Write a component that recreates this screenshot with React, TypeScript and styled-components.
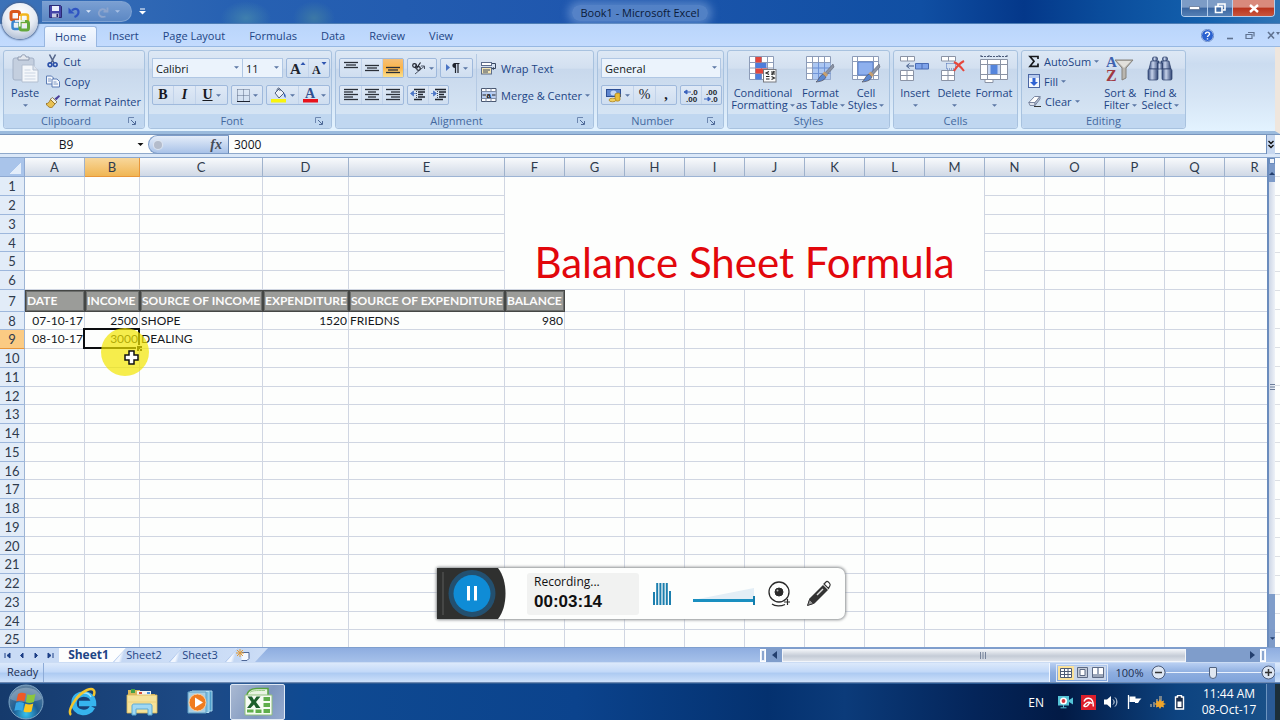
import React from "react";
import styled, { createGlobalStyle, css } from "styled-components";

const UI = `"Open Sans", "Noto Sans", sans-serif`;
const CELL = `"Lato", "Open Sans", sans-serif`;

const Global = createGlobalStyle`
  * { box-sizing: border-box; }
  body { margin: 0; background: #0c3c7c; font-family: ${UI}; font-size: 11px; color: #1d4585; }
  button, input, select { font: inherit; color: inherit; margin: 0; padding: 0; }
  button { border: 0; background: none; cursor: default; }
  svg { display: block; flex: none; }
`;

const Desktop = styled.div`
  position: relative;
  display: flex;
  flex-direction: column;
  height: 100vh;
  min-height: 480px;
  overflow: hidden;
`;

/* ---------- title bar ---------- */
const TitleBar = styled.header`
  display: grid;
  grid-template-columns: 1fr auto 1fr;
  height: 24px;
  border-bottom: 1px solid #4d7db5;
  background:
    radial-gradient(ellipse 36px 24px at 246px 18px, #3f7fae 0, transparent 70%),
    radial-gradient(ellipse 30px 24px at 314px 18px, #3c78a6 0, transparent 70%),
    linear-gradient(90deg, #3c72b8 0, #2761b2 18%, #1f57ae 45%, #104fa3 72%, #04388a 80%, #0a4c9b 86%, #1360ad 94%, #2f74b5 100%);
`;
const QuickZone = styled.div`
  display: flex;
  align-items: center;
  padding-left: 42px;
`;
const QuickBar = styled.div`
  display: flex;
  align-items: center;
  gap: 6px;
  height: 21px;
  width: 90px;
  padding-left: 7px;
  border: 1px solid #7fa3d3;
  border-left: 0;
  border-radius: 0 11px 11px 0;
  background: linear-gradient(#7a9fd2, #5c88c4);
`;
const QuickMore = styled.button`
  margin-left: 7px;
`;
const WindowTitle = styled.h1`
  margin: 2px 0 0;
  align-self: center;
  padding: 0 8px;
  font-size: 11px;
  line-height: 16px;
  font-weight: 400;
  color: #0a1a38;
  border-radius: 8px;
  background: rgba(150, 185, 230, 0.45);
  box-shadow: 0 0 8px 4px rgba(150, 185, 230, 0.45);
`;
const WindowButtons = styled.div`
  justify-self: end;
  display: flex;
  height: 17px;
  margin-right: 5px;
  border: 1px solid #b3cdec;
  border-top: 0;
  border-radius: 0 0 4px 4px;
  overflow: hidden;
`;
const WindowButton = styled.button<{ $close?: boolean }>`
  display: grid;
  place-items: center;
  width: ${(p) => (p.$close ? 42 : 25)}px;
  & + & { border-left: 1px solid #b3cdec; }
  background: ${(p) =>
    p.$close ? "linear-gradient(#d98a7c 45%, #b8331d 50%, #c9553c)" : "linear-gradient(#7d9cc6 45%, #3a659f 50%, #5580b5)"};
`;
const OfficeOrb = styled.button`
  position: absolute;
  left: 2px;
  top: 3px;
  z-index: 3;
  width: 36px;
  height: 36px;
  border-radius: 50%;
  display: grid;
  place-items: center;
  background: radial-gradient(circle at 50% 30%, #ffffff 0, #e6ebf3 50%, #aebcd2 85%, #e8eef8 100%);
  box-shadow: 0 0 2px 1px #48628c;
`;

/* ---------- ribbon ---------- */
const TabRow = styled.nav`
  display: flex;
  align-items: flex-end;
  height: 23px;
  padding: 0 0 0 44px;
  background: linear-gradient(#b9d5fb, #c3dbfe);
  border-bottom: 1px solid #97b8e2;
`;
const Tab = styled.button<{ $active?: boolean }>`
  height: 21px;
  padding: 0 12px;
  line-height: 20px;
  ${(p) =>
    p.$active &&
    css`
      padding: 0 10px;
      margin-bottom: -1px;
      line-height: 18px;
      border: 1px solid #98b6e0;
      border-bottom: 0;
      border-radius: 3px 3px 0 0;
      background: linear-gradient(#f4f9ff, #e0eafa);
    `}
`;
const TabTools = styled.div`
  margin-left: auto;
  display: flex;
  align-items: center;
  gap: 12px;
  height: 22px;
`;
const Ribbon = styled.section`
  display: flex;
  gap: 3px;
  height: 87px;
  padding: 3px 0 2px 3px;
  background: linear-gradient(#dbe7f6 0, #cbdcf0 20%, #d6e5f5 60%, #e3f3ff 100%);
  border-bottom: 3px solid #9bbbdd;
  border-right: 5px solid #efe6dd;
`;
const GroupBox = styled.fieldset<{ $w: number }>`
  display: flex;
  flex-direction: column;
  width: ${(p) => p.$w}px;
  min-width: 0;
  margin: 0;
  padding: 0;
  border: 1px solid #a8c2df;
  border-radius: 3px;
  background: linear-gradient(#dde8f5 0, #d3e0f0 22%, #c8d8ec 24%, #d9e8f6 100%);
`;
const GroupBody = styled.div`
  display: flex;
  flex: 1;
  min-height: 0;
  padding: 0 3px;
`;
const GroupLabel = styled.div<{ $launch?: boolean }>`
  display: grid;
  grid-template-columns: ${(p) => (p.$launch ? "1fr 16px" : "1fr")};
  align-items: center;
  height: 14px;
  line-height: 14px;
  text-align: center;
  color: #44699f;
  background: #c0d7f0;
  border-radius: 0 0 3px 3px;
`;
const BigButton = styled.button<{ $w: number }>`
  display: flex;
  flex-direction: column;
  align-items: center;
  width: ${(p) => p.$w}px;
  padding-top: 3px;
  line-height: 12px;
  white-space: nowrap;
`;
const BigIcon = styled.span`
  display: grid;
  place-items: center;
  height: 30px;
  margin-bottom: 3px;
`;
const CaretLine = styled.span`
  display: flex;
  align-items: center;
  gap: 2px;
  height: 12px;
`;
const SmallList = styled.div`
  display: flex;
  flex-direction: column;
  padding-left: 3px;
`;
const SmallButton = styled.button`
  display: flex;
  align-items: center;
  gap: 3px;
  height: 20px;
  white-space: nowrap;
  & > svg:first-child { margin-right: 1px; }
`;
const Rows = styled.div`
  display: flex;
  flex-direction: column;
  gap: 7px;
  padding-top: 7px;
  flex: 1;
`;
const Row = styled.div`
  display: flex;
  gap: 3px;
  height: 20px;
`;
const ButtonSet = styled.div`
  display: flex;
  border: 1px solid #9fb9dc;
  border-radius: 2px;
  background: linear-gradient(#dfe9f6, #cfdef0);
`;
const Tool = styled.button<{ $w: number; $on?: boolean }>`
  display: flex;
  align-items: center;
  justify-content: center;
  gap: 3px;
  width: ${(p) => p.$w}px;
  color: #17191f;
  font-family: "Liberation Serif", serif;
  font-size: 14px;
  line-height: 16px;
  & + & { border-left: 1px solid #c2d3ea; }
  background: ${(p) => (p.$on ? "linear-gradient(#f5c078, #fbb54a 50%, #fbe08c)" : "none")};
`;
const SelectBox = styled.label<{ $w: number }>`
  position: relative;
  display: block;
  width: ${(p) => p.$w}px;
  height: 20px;
  svg { position: absolute; right: 4px; top: 8px; pointer-events: none; }
  & + & { margin-left: -4px; }
`;
const Select = styled.select`
  appearance: none;
  width: 100%;
  height: 20px;
  padding: 0 3px;
  border: 1px solid #b0c7e4;
  border-radius: 0;
  background: #ebf3fc;
  color: #101820;
  outline: 0;
`;
const WideTools = styled.div`
  display: flex;
  flex-direction: column;
  gap: 7px;
  margin: 3px 0;
  padding: 4px 0 0 4px;
  border-left: 1px solid #b5cae4;
`;

/* ---------- formula bar ---------- */
const FormulaBar = styled.div`
  display: flex;
  height: 23px;
  padding-right: 5px;
  border-bottom: 3px solid #dbe8f8;
  border-top: 1px solid #7896bd;
  background: #fdfefd;
  box-shadow: inset 0 -1px 0 #8fa9cb;
`;
const NameBox = styled.label`
  display: flex;
  align-items: center;
  width: 148px;
  padding-right: 4px;
`;
const BarInput = styled.input<{ $center?: boolean }>`
  flex: 1;
  min-width: 0;
  height: 18px;
  border: 0;
  outline: 0;
  background: transparent;
  color: #10141c;
  font-size: 12px;
  padding: ${(p) => (p.$center ? "0 5px 0 0" : "0 5px")};
  text-align: ${(p) => (p.$center ? "center" : "left")};
`;
const FxPill = styled.div`
  display: flex;
  align-items: center;
  justify-content: space-between;
  width: 81px;
  height: 19px;
  padding: 0 6px 0 5px;
  border: 1px solid #7d9cc8;
  border-right: 1px solid #6787b4;
  border-radius: 10px 0 0 10px;
  background: linear-gradient(#e4edf9, #a9c2e8);
  font: italic 700 14px/18px "Liberation Serif", serif;
  color: #444b58;
`;
const Knob = styled.span`
  width: 8px;
  height: 8px;
  border-radius: 50%;
  background: #b4bccb;
  box-shadow: 0 0 1px 1px #dfe6f0;
`;
const ExpandButton = styled.button`
  display: grid;
  place-items: center;
  width: 9px;
  border-left: 1px solid #6f8fbd;
  background: #c7d8f0;
  color: #111;
`;

/* ---------- worksheet ---------- */
const SheetArea = styled.main`
  display: flex;
  flex: 1;
  min-height: 0;
  background: #fdfefd;
  border-top: 1px solid #8ba7cd;
`;
const SheetView = styled.div`
  flex: 1;
  min-width: 0;
  overflow: hidden;
`;
const Grid = styled.table`
  table-layout: fixed;
  width: 1285px;
  border-collapse: separate;
  border-spacing: 0;
  font-family: ${CELL};
  font-size: 12px;
  line-height: 16px;
  color: #15181c;
`;
const GridRow = styled.tr<{ $h: number }>`
  height: ${(p) => p.$h}px;
`;
const Corner = styled.td`
  padding: 0;
  border-right: 1px solid #8ea9d2;
  border-bottom: 1px solid #8ea9d2;
  background: linear-gradient(135deg, transparent 50%, #e3edfa 50%) 9px 5px / 12px 11px no-repeat #a9c4ea;
`;
const ColHead = styled.th<{ $on?: boolean }>`
  padding: 0;
  font-weight: 400;
  font-size: 13px;
  line-height: 17px;
  color: #2f3b4d;
  border-right: 1px solid ${(p) => (p.$on ? "#e8963a" : "#9fb2cc")};
  border-bottom: 1px solid ${(p) => (p.$on ? "#e8963a" : "#9db4d4")};
  background: ${(p) => (p.$on ? "linear-gradient(#f8d79b, #f0b654)" : "linear-gradient(#f8fafc, #e6ebf2 45%, #d0d9e6)")};
`;
const RowHead = styled.th<{ $on?: boolean }>`
  padding: 0;
  font-weight: 400;
  font-size: 13px;
  line-height: 16px;
  color: #2f3b4d;
  border-right: 1px solid #9db4d4;
  border-bottom: 1px solid ${(p) => (p.$on ? "#e8963a" : "#9db7dc")};
  background: ${(p) => (p.$on ? "#fbcb83" : "#e2ecf8")};
`;
const Cell = styled.td<{ $right?: boolean; $active?: boolean }>`
  position: relative;
  padding: 0 1px;
  white-space: nowrap;
  text-align: ${(p) => (p.$right ? "right" : "left")};
  border-right: 1px solid #d0d6e2;
  border-bottom: 1px solid #d0d6e2;
  ${(p) =>
    p.$active &&
    css`
      &::before {
        content: "";
        position: absolute;
        inset: -2px -1px -1px -2px;
        border: 2px solid #0b0d10;
      }
      &::after {
        content: "";
        position: absolute;
        right: -3px;
        bottom: -3px;
        width: 5px;
        height: 5px;
        border: solid #fdfefd;
        border-width: 1px 0 0 1px;
        background: #0b0d10;
      }
    `}
`;
const LabelCell = styled.td`
  padding: 0 1px;
  overflow: hidden;
  white-space: nowrap;
  font-weight: 700;
  color: #fbfbfb;
  background: #9b9c99;
  border: 1px solid #454745;
  box-shadow: inset 0 0 0 1px #6d6f6d;
`;
const TitleCell = styled.td`
  padding: 0 0 2px;
  vertical-align: bottom;
  text-align: center;
  border-right: 1px solid #d0d6e2;
  border-bottom: 1px solid #d0d6e2;
  font-size: 42px;
  line-height: 50px;
  color: #e2070c;
`;
const VScroll = styled.div`
  display: flex;
  flex-direction: column;
  width: 8px;
  border-left: 2px solid #6a8cbd;
  background: #dfe6f2;
`;
const VSplit = styled.div`
  height: 6px;
  background: #eef3fa;
  border: 1px solid #6a8cbd;
`;
const VArrow = styled.button`
  display: grid;
  place-items: center;
  height: 18px;
  background: #7d9bc9;
`;
const VThumb = styled.div`
  flex: 1;
  display: grid;
  place-items: center;
  background: linear-gradient(90deg, #cdd6e6, #eef2f8);
`;
const VTrack = styled.div`
  height: 35px;
  background: #7f9dca;
`;
const OuterEdge = styled.div`
  width: 5px;
  background: repeating-linear-gradient(#fdfefd 0 18px, #dcdfe4 18px 19px);
`;

/* ---------- sheet tabs ---------- */
const SheetBar = styled.div`
  display: flex;
  height: 16px;
  padding-right: 14px;
  border-top: 1px solid #7f9fce;
  border-bottom: 1px solid #cbdcf4;
  background: linear-gradient(#8eade0, #a6c1ea);
`;
const SheetNav = styled.div`
  display: flex;
  align-items: center;
  width: 59px;
  padding-left: 4px;
  gap: 6px;
  background: #c9dbf5;
`;
const SheetTab = styled.button<{ $on?: boolean; $w: number }>`
  width: ${(p) => p.$w}px;
  margin-right: -12px;
  padding: 0 8px 1px 0;
  display: grid;
  place-items: center;
  line-height: 13px;
  font-size: ${(p) => (p.$on ? 12 : 11)}px;
  font-weight: ${(p) => (p.$on ? 700 : 400)};
  z-index: ${(p) => (p.$on ? 2 : 1)};
  clip-path: ${(p) =>
    p.$on ? "polygon(0 0, 100% 0, calc(100% - 13px) 100%, 0 100%)" : "polygon(12px 0, 100% 0, calc(100% - 13px) 100%, 0 100%)"};
  background: ${(p) => (p.$on ? "#fdfefe" : "linear-gradient(105deg, #f2f7ff 8px, #c4d7f3 11px, #cddef7 90%, #f2f7ff)")};
`;
const HScroll = styled.div`
  display: flex;
  align-items: center;
  flex: 0 1 506px;
  margin-left: auto;
  background: #7f9dcb;
`;
const Splitter = styled.span`
  width: 6px;
  height: 13px;
  border: 1px solid #ffffff;
  background: #8aa5cf;
  box-shadow: inset 0 0 0 1px #e8effa;
`;
const ScrollArrow = styled.button`
  display: grid;
  place-items: center;
  width: 16px;
  height: 14px;
`;
const HThumb = styled.div`
  flex: 0 1 404px;
  height: 13px;
  display: grid;
  place-items: center;
  background: linear-gradient(#eff2f6, #c4cbd6 55%, #dde2ea);
  border: 1px solid #f2f5fa;
`;
const HGap = styled.div`
  flex: 1;
`;

/* ---------- status bar ---------- */
const StatusBar = styled.footer`
  display: flex;
  height: 20px;
  padding-right: 5px;
  background: linear-gradient(#dce9fb, #c3d9f8 45%, #aecbf2 55%, #cde0fa);
  border-bottom: 1px solid #6c88b1;
`;
const StatusText = styled.span`
  width: 44px;
  padding-left: 7px;
  line-height: 18px;
  color: #1c2f52;
  border-right: 1px solid #8eacd8;
`;
const StatusRight = styled.div`
  display: flex;
  align-items: center;
  margin-left: auto;
  width: 226px;
  padding-left: 6px;
  color: #1c2f52;
  border-left: 1px solid #f0f6ff;
  background: linear-gradient(#b8cff2, #8eaee0 50%, #7fa3da);
`;
const ViewButtons = styled.div`
  display: flex;
  padding: 1px;
  border: 1px solid #dfe9f8;
`;
const ViewButton = styled.button<{ $on?: boolean }>`
  display: grid;
  place-items: center;
  width: 16px;
  height: 14px;
  background: ${(p) => (p.$on ? "#fbe29a" : "#c9d6ea")};
`;
const ZoomText = styled.button`
  width: 43px;
  text-align: center;
`;
const ZoomRange = styled.input`
  appearance: none;
  flex: 1;
  min-width: 0;
  height: 14px;
  background: linear-gradient(#e9f1fd, #e9f1fd) 0 50% / 100% 1px no-repeat;
  &::-webkit-slider-thumb {
    appearance: none;
    width: 8px;
    height: 12px;
    border: 1px solid #51627f;
    border-radius: 1px 1px 4px 4px;
    background: #dfe6f0;
  }
`;

/* ---------- taskbar ---------- */
const Taskbar = styled.footer`
  display: flex;
  align-items: center;
  height: 37px;
  color: #fff;
  background: linear-gradient(90deg, #153a6c 0, #1d4a86 16%, #0f4a92 24%, #0b438d 45%, #04316f 60%, #0b3b7a 66%, #04255a 76%, #021a45 83%, #0d4380 92%, #1b5289 100%);
  border-top: 1px solid #2b5a94;
`;
const TaskButton = styled.button<{ $w: number; $on?: boolean }>`
  display: grid;
  place-items: center;
  width: ${(p) => p.$w}px;
  height: 36px;
  ${(p) =>
    p.$on &&
    css`
      border: 1px solid #dfe9f5;
      border-radius: 2px;
      background: linear-gradient(120deg, #a9b9d2, #7f97bf 60%, #95abd0);
    `}
`;
const Tray = styled.div`
  display: flex;
  align-items: center;
  gap: 8px;
  margin-left: auto;
`;
const Lang = styled.span`
  padding-right: 6px;
  font-size: 12px;
`;
const Clock = styled.time`
  width: 66px;
  text-align: center;
  font-size: 12px;
  line-height: 16px;
  margin: 0 -4px 0 3px;
`;
const ShowDesktop = styled.button`
  width: 14px;
  height: 36px;
  border-left: 1px solid #6d94c0;
  border-right: 5px solid #1c2f3a;
  background: #2a5a95;
`;

/* ---------- screen recorder widget and pointer ---------- */
const Recorder = styled.aside`
  position: absolute;
  left: 437px;
  top: 568px;
  z-index: 5;
  display: flex;
  align-items: center;
  width: 408px;
  height: 51px;
  border-radius: 2px 7px 7px 2px;
  background: #fdfefd;
  box-shadow: 0 0 3px 1px #8a8d90;
  color: #101010;
`;
const PauseButton = styled.button`
  width: 69px;
  height: 51px;
  margin-right: 21px;
`;
const RecordInfo = styled.div`
  width: 112px;
  height: 42px;
  padding: 1px 7px;
  border-radius: 3px;
  background: #f1f2f1;
  font-size: 12px;
  line-height: 16px;
`;
const RecordTime = styled.div`
  font: 700 17px/24px "Liberation Sans", sans-serif;
`;
const Meter = styled.div`
  margin: 0 22px 0 14px;
`;
const Volume = styled.label`
  display: grid;
  align-items: end;
  width: 62px;
  height: 22px;
  margin-right: 13px;
  & > * { grid-area: 1 / 1; }
`;
const VolumeRange = styled.input`
  appearance: none;
  width: 62px;
  height: 9px;
  background: linear-gradient(#1a8fc0, #1a8fc0) 0 50% / 100% 3px no-repeat;
  &::-webkit-slider-thumb {
    appearance: none;
    width: 2px;
    height: 9px;
    background: #137eac;
  }
`;
const RecTool = styled.button`
  width: 26px;
  height: 28px;
  margin-right: 12px;
`;
const ClickHalo = styled.div`
  position: absolute;
  left: 101px;
  top: 328px;
  z-index: 4;
  width: 48px;
  height: 48px;
  border-radius: 50%;
  background: rgba(242, 230, 0, 0.7);
  svg { margin: 22px 0 0 23px; }
`;

/* ---------- icons ---------- */
const Caret = ({ w = 5, c = "#5a76a4" }: { w?: number; c?: string }) => (
  <svg width={w} height={3} viewBox="0 0 6 3"><path d="M0 0h6L3 3z" fill={c} /></svg>
);
const Launcher = () => (
  <svg width="8" height="8" viewBox="0 0 8 8" fill="none" stroke="#6d87b0"><path d="M.5 6V.5H6" /><path d="M3 3l4 4M7.500 4v3.500H4" stroke="#4f6a98" /></svg>
);
const Lines = ({ rows, y = 0 }: { rows: [number, number][]; y?: number }) => (
  <svg width="14" height="14" viewBox="0 0 14 14" stroke="#2a2f38">
    {rows.map(([a, b], i) => <path key={i} d={`M${a} ${y + 1.5 + i * 2.5}H${b}`} strokeWidth="1.3" />)}
  </svg>
);
const Indent = ({ flip }: { flip?: boolean }) => (
  <svg width="16" height="14" viewBox="0 0 16 14" stroke="#20252e" fill="none">
    <path d="M4 1.500h11M8 4h7M8 6.500h5M8 9h7M4 11.500h8" strokeWidth="1.300" />
    <path d="M6.500 1v12" strokeDasharray="1 1" strokeWidth=".8" />
    <path d={flip ? "M0 5.500h4M2.500 3l3 2.500-3 2.500z" : "M6 5.500H2M3.500 3l-3 2.500 3 2.500z"} stroke="#4a74c4" fill="#4a74c4" strokeWidth=".8" />
  </svg>
);
const OfficeLogo = () => (
  <svg width="24" height="24" viewBox="0 0 24 24" fill="none" strokeWidth="3">
    <rect x="3" y="2.500" width="8.500" height="8.500" rx="2" stroke="#d9581c" />
    <rect x="12.500" y="5.500" width="7.500" height="7.500" rx="2" stroke="#f2b61f" strokeWidth="2.500" />
    <rect x="4.500" y="12.500" width="7.500" height="7.500" rx="2" stroke="#3b86cf" strokeWidth="2.500" />
    <rect x="12" y="12.500" width="8.500" height="8.500" rx="2" stroke="#63a83a" />
    <path d="M11.800 7v10.500M7 12h10" stroke="#fff" strokeWidth="1.500" />
  </svg>
);
const SaveIcon = () => (
  <svg width="13" height="13" viewBox="0 0 13 13"><path d="M.5.500h11l1 1v11H.5z" fill="#4546a8" stroke="#2a2b75" /><path d="M3 1h7v5H3z" fill="#e9effb" /><path d="M3 8.500h7v4H3z" fill="#c9cfe4" /><path d="M7.500 9h1.700v3H7.500z" fill="#26276a" /></svg>
);
const Undo = ({ redo }: { redo?: boolean }) => (
  <svg width="12" height="12" viewBox="0 0 12 12" fill="none">
    {redo
      ? <path d="M8.500 10.500C4 12 1 9 2 6c1-3 5-4 7-1M10.500 1.500v4h-4" stroke="#8da5cd" strokeWidth="1.800" />
      : <g><path d="M4 4.500C7 1.500 10.500 3 10.500 6c0 2.500-1.500 4-4 5" stroke="#2f55c2" strokeWidth="2.200" /><path d="M.5 1.500v6h6z" fill="#2f55c2" /></g>}
  </svg>
);
const PasteIcon = () => (
  <svg width="27" height="30" viewBox="0 0 27 30">
    <rect x="1" y="4" width="21" height="22" rx="2" fill="#c4cfdf" stroke="#a3b1c6" />
    <path d="M6 6V3h3c0-3 5-3 5 0h3v3z" fill="#e4e8ee" stroke="#8f9bb0" />
    <path d="M10 11h11l5 5v12H10z" fill="#f4f7fb" stroke="#b3bfd0" />
    <path d="M21 11v5h5" fill="#dde4ee" stroke="#b3bfd0" />
    <path d="M12.500 16h6M12.500 19h11M12.500 22h11M12.500 25h11" stroke="#cbd5e3" />
  </svg>
);
const CutIcon = () => (
  <svg width="13" height="14" viewBox="0 0 13 14" fill="none"><path d="M3.500.500L8 9M9.500.500L5 9" stroke="#55668a" strokeWidth="1.600" /><circle cx="4" cy="10.800" r="1.900" stroke="#2b50a8" strokeWidth="1.600" /><circle cx="9.200" cy="10.600" r="1.900" stroke="#2b50a8" strokeWidth="1.600" /></svg>
);
const CopyIcon = () => (
  <svg width="14" height="13" viewBox="0 0 14 13" fill="#f5f8fd" stroke="#5d7db5"><path d="M.5 1h5l2 2v6h-7z" /><path d="M6 4h5l2.500 2.500V12H6z" /><path d="M2 4h3M2 6h3M7.500 7h3M7.500 9h4.500" strokeWidth=".8" /></svg>
);
const BrushIcon = () => (
  <svg width="14" height="14" viewBox="0 0 14 14"><path d="M13 1L8.500 4.500l1.800 1.800L14 2.500z" fill="#4a3f9a" /><path d="M6.500 3.500l4.500 4.500-2 2-5-4.500z" fill="#f4f0dc" stroke="#6d5a2a" strokeWidth=".7" /><path d="M4.500 5.500L9 10l-3.500 4C3 13.500 1 12 0 9.500c2 .3 3-1 4.500-4z" fill="#e8c152" stroke="#8f6a1c" strokeWidth=".8" /></svg>
);
const GrowA = ({ down }: { down?: boolean }) => (
  <svg width="17" height="16" viewBox="0 0 17 16">
    <text x="1" y="14" fontFamily="Liberation Serif" fontWeight="700" fontSize={down ? 12 : 15} fill="#20242e">A</text>
    <path d={down ? "M10.500 2h5l-2.500 3z" : "M11.500 5h5L14 2z"} fill="#2f55b0" />
  </svg>
);
const BorderIcon = () => (
  <svg width="13" height="13" viewBox="0 0 13 13" stroke="#5a6a86" fill="none" strokeDasharray="1 1"><path d="M.5.500h12v12M.5.500v12M6.500.500v12M.5 6.500h12" /><path d="M0 12.500h13" strokeDasharray="none" stroke="#1c2230" /></svg>
);
const FillColor = () => (
  <svg width="16" height="16" viewBox="0 0 16 16"><path d="M4 6l4.500-4.500L13 6 8 11z" fill="#eef2f8" stroke="#4f5f7e" /><path d="M6 4c0-4 3-4 3 0" fill="none" stroke="#4f5f7e" /><path d="M13 6c2 2 2 3 1.500 5-1.500-1-2-3-1.500-5z" fill="#3765bd" /><path d="M0 12h15v3.500H0z" fill="#f8f40c" /></svg>
);
const FontColor = () => (
  <svg width="15" height="16" viewBox="0 0 15 16"><text x="2" y="11" fontFamily="Liberation Serif" fontWeight="700" fontSize="14" fill="#33508f">A</text><path d="M0 12h15v3.500H0z" fill="#e8131c" /></svg>
);
const Orientation = () => (
  <svg width="15" height="14" viewBox="0 0 15 14" fill="none" stroke="#20242e" strokeWidth="1.200"><circle cx="3.500" cy="4.500" r="1.800" /><path d="M5.500 3.500L4.500 7.500" /><circle cx="7.500" cy="7.500" r="1.800" /><path d="M9.500 1.500L6 6.500" /><path d="M4 13l9-7.500M10 5h3.500v3" stroke="#4c5566" strokeWidth="1" /></svg>
);
const WrapIcon = () => (
  <svg width="16" height="14" viewBox="0 0 16 14" fill="none"><rect x=".5" y="1.500" width="10" height="3" fill="#fff" stroke="#5d6d8a" /><rect x=".5" y="6.500" width="10" height="6.500" fill="#f6e7b5" stroke="#5d6d8a" /><path d="M2 9h7M2 11h5M11 2.500h3.500v5H11" stroke="#374660" /><path d="M13 6l-2.500 1.500L13 9z" fill="#374660" /></svg>
);
const MergeIcon = () => (
  <svg width="16" height="14" viewBox="0 0 16 14"><path d="M.5.500h14.500v13H.5z" fill="#fff" stroke="#4a5872" /><path d="M.5 3.500h14.500M.5 10.500h14.500M5 .5v3M10 .5v3M5 10.500v3M10 10.500v3" stroke="#7e8ca6" /><path d="M1 4h13.500v6H1z" fill="#b9cdf0" /><path d="M1.500 7h3.500M11 7h3.500" stroke="#222" /><text x="5.500" y="9.500" fontSize="8" fontWeight="700" fontFamily="Liberation Sans" fill="#111">a</text></svg>
);
const MoneyIcon = () => (
  <svg width="16" height="15" viewBox="0 0 16 15"><rect x=".5" y="1.500" width="14" height="7" fill="#5f86cf" stroke="#2d4f95" /><ellipse cx="7.500" cy="5" rx="3" ry="2.500" fill="#c5d7f5" /><path d="M9 6c2-1.500 5-1 5 0v6c0 1.500-5 1.500-5 0z" fill="#e9bd3a" stroke="#a87b16" strokeWidth=".7" /><ellipse cx="6.500" cy="12" rx="3.500" ry="1.800" fill="#f1cf5e" stroke="#a87b16" strokeWidth=".7" /></svg>
);
const Decimal = ({ less }: { less?: boolean }) => (
  <svg width="17" height="15" viewBox="0 0 17 15" fontFamily="Liberation Sans" fontWeight="700" fontSize="8">
    <text x={less ? 3 : 8} y="7" fill="#22262e">{less ? ".00" : ".0"}</text>
    <text x={less ? 8 : 3} y="14" fill="#22262e">{less ? ".0" : ".00"}</text>
    <path d={less ? "M1 11h6M5 9l2.500 2L5 13z" : "M2 4h6M4 2L1 4l3 2z"} stroke="#3a63bd" fill="#3a63bd" />
  </svg>
);
const gridPath = "M.5.500h24v23H.5zM.5 6.500h24M.5 12h24M.5 17.500h24M6.500.500v23M12.500.500v23M18.500.500v23";
const CondIcon = () => (
  <svg width="28" height="27" viewBox="0 0 28 27"><path d={gridPath} fill="#fff" stroke="#8d9cb8" /><path d="M6.500 1h6v5.500h-6zM6.500 12.500h12v5h-12z" fill="#e3473e" /><path d="M6.500 7h11v5h-11zM6.500 18h6v5.500h-6z" fill="#4f7edb" /><rect x="14.500" y="13.500" width="12.500" height="12.500" fill="#fbfbfb" stroke="#77797f" /><path d="M20 15.500l-3 1.500 3 1.500M17 20.500h3.500M22 16h4M22 18h4M25 15l-2 4M22.500 20.500l3 1.500-3 1.500M17 23h3.500" stroke="#222" fill="none" strokeWidth="1.100" /></svg>
);
const Brush = () => (
  <g><path d="M27 8L17 19l2 2L28 11z" fill="#8b93a4" stroke="#5c6374" strokeWidth=".6" /><path d="M17 18l3 3c-2 4-6 4.500-10 5 3-2 3-6 7-8z" fill="#5a86cf" stroke="#54525a" strokeWidth=".7" /><path d="M16.500 17.500l2-2 3.500 3.500-2 2z" fill="#c8a070" /></g>
);
const TableFmtIcon = () => (
  <svg width="29" height="27" viewBox="0 0 29 27"><path d={gridPath} fill="#fff" stroke="#8d9cb8" /><path d="M7 7h17.500v16.500H7z" fill="#9dbdf0" opacity=".85" /><path d="M6.500 12h18M6.500 17.500h18M12.500 6.500v17M18.500 6.500v17" stroke="#6f93d6" /><Brush /></svg>
);
const CellStyleIcon = () => (
  <svg width="29" height="27" viewBox="0 0 29 27"><path d="M.5.500h26v23H.5zM.5 5.500h26M.5 19.500h26M5.500.500v23M21.500.500v23" fill="#fff" stroke="#8d9cb8" /><path d="M6 6h15v13H6z" fill="#8eb0ee" stroke="#5a80cc" /><Brush /></svg>
);
const cellBlocks = "M.5.500h14v4.500H.5zM7.500.500v4.500M.5 14.500h13v10H.5zM7 14.500v10M.5 19.500h13";
const InsertIcon = () => (
  <svg width="30" height="27" viewBox="0 0 30 27"><path d={cellBlocks} fill="#fff" stroke="#8a93a5" /><path d="M15.500 7.500h13v5.500h-13zM22 7.500v5.500" fill="#7fa3ea" stroke="#4a6cb4" /><path d="M7 10h7M9.500 7.500L6.500 10l3 2.500" stroke="#3d5686" fill="none" /></svg>
);
const DeleteIcon = () => (
  <svg width="26" height="27" viewBox="0 0 26 27"><path d={cellBlocks} fill="#fff" stroke="#8a93a5" /><path d="M5.500 7.500h9v5.500h-9z" fill="none" stroke="#4a6cb4" strokeDasharray="1 1" /><path d="M13 6c4 2 7 5 10 9M23 5c-4 2-7 5-10 10" stroke="#e6473c" strokeWidth="2" fill="none" /></svg>
);
const FormatIcon = () => (
  <svg width="29" height="28" viewBox="0 0 29 28"><path d="M1 1.500h26M1 0v3M9 0v3M19 0v3M27 0v3" stroke="#4b5a78" strokeDasharray="2 1" /><path d="M.5 4.500h27v20H.5zM.5 9.500h27M.5 19.500h27M7.500 4.500v20M20.500 4.500v20" fill="#fff" stroke="#8a93a5" /><path d="M8 10h12v9H8z" fill="#c7d7f4" /><path d="M10.500 10h7v9h-7z" fill="#5585dc" /><path d="M5 24.500h8v3H5z" fill="#fff" stroke="#8a93a5" /></svg>
);
const SigmaIcon = () => (
  <svg width="12" height="13" viewBox="0 0 12 13"><path d="M10 4V1.500H2l4 4.800-4 5h8V8.500" fill="none" stroke="#16181d" strokeWidth="1.700" /></svg>
);
const FillIcon = () => (
  <svg width="12" height="14" viewBox="0 0 12 14"><rect x=".5" y=".5" width="11" height="13" fill="#f4f7fd" stroke="#4b66a3" /><path d="M1 1h10v3H1z" fill="#b7caee" /><path d="M4.500 4h3v4h2.500L6 12 2 8h2.500z" fill="#2f62d3" /></svg>
);
const ClearIcon = () => (
  <svg width="13" height="12" viewBox="0 0 13 12"><path d="M.8 7.500L6.500 1.500h5.500L7 7.500z" fill="#fdfdfd" stroke="#7b86a0" /><path d="M.8 7.500H7v3H2z" fill="#dfe4ee" stroke="#7b86a0" /><path d="M7 7.500l5-6v2.500L7 10.500z" fill="#b7c0d2" stroke="#7b86a0" /><path d="M6 11.500h7" stroke="#333" /></svg>
);
const SortIcon = () => (
  <svg width="28" height="28" viewBox="0 0 28 28"><path d="M9 5h18l-7 8v10l-4 2V13z" fill="#b9b6b0" stroke="#85827c" /><path d="M11 6h14l-7 7z" fill="#e3e1dc" /><text x="0" y="12" fontFamily="Liberation Serif" fontWeight="700" fontSize="15" fill="#3e62ae">A</text><text x="0" y="26" fontFamily="Liberation Serif" fontWeight="700" fontSize="16" fill="#a03a44">Z</text></svg>
);
const FindIcon = () => (
  <svg width="26" height="26" viewBox="0 0 26 26"><defs><linearGradient id="bino" x1="0" x2="1"><stop offset="0" stopColor="#31497c" /><stop offset=".4" stopColor="#c6d2ea" /><stop offset="1" stopColor="#2c4171" /></linearGradient></defs><g stroke="#2c3f6a" strokeWidth=".7" fill="url(#bino)"><rect x="5.500" y="1" width="5" height="4" rx="1.500" /><rect x="15.500" y="1" width="5" height="4" rx="1.500" /><path d="M4 5h8v8H2z" /><path d="M14 5h8l2 8H14z" /><rect x="10.500" y="7" width="5" height="6" /><rect x="1" y="13" width="10" height="11" rx="1.500" /><rect x="15" y="13" width="10" height="11" rx="1.500" /></g></svg>
);
const HelpIcon = () => (
  <svg width="13" height="13" viewBox="0 0 13 13"><circle cx="6.500" cy="6.500" r="6" fill="#2b62d0" stroke="#dce9fb" /><circle cx="6.500" cy="6.500" r="6.200" fill="none" stroke="#3562b4" strokeWidth=".6" /><path d="M4.500 5c0-2.500 4-2.500 4 0 0 1.500-2 1.500-2 3M6.500 9.200v1.300" fill="none" stroke="#fff" strokeWidth="1.400" /></svg>
);
const NavArrow = ({ d }: { d: string }) => (
  <svg width="8" height="7" viewBox="0 0 8 7" fill="#1c3f86" stroke="#1c3f86"><path d={d} /></svg>
);
const StartOrb = () => (
  <svg width="36" height="36" viewBox="0 0 36 36"><defs><radialGradient id="orb" cx=".5" cy=".85" r=".8"><stop offset="0" stopColor="#35c3ef" /><stop offset=".45" stopColor="#1d5c92" /><stop offset="1" stopColor="#5c7f9f" /></radialGradient></defs><circle cx="18" cy="18" r="17" fill="url(#orb)" stroke="#7fa6c6" /><path d="M2 15C5 0 31 0 34 15c-8 4-24 4-32 0z" fill="#fff" opacity=".25" /><path d="M10 10c3-2 5.500-1.500 8-.3L16.300 17.500c-2.500-1.200-5.500-1.300-8 0z" fill="#ef5a28" /><path d="M19.300 10.300c3 1.200 5.500.8 8.200-.3L25.800 18c-2.500 1.200-5.500 1.200-8 .3z" fill="#8cc63c" /><path d="M8 18.800c2.800-1.400 5.500-1 8 .2L14.300 27c-2.500-1.400-5.500-1.300-8-.2z" fill="#37a6e6" /><path d="M17.300 19.700c2.500 1 5.500 1 8-.2L23.500 27.500c-2.500 1.300-5.500 1-8 0z" fill="#fcc71e" /></svg>
);
const IeIcon = () => (
  <svg width="30" height="30" viewBox="0 0 30 30" fill="none"><path d="M24.500 20C20.500 28.500 6 27 6 16c0-12 19.500-12.500 19.500.5H11" stroke="#36b4ee" strokeWidth="5.500" /><path d="M8 12c3-7 12-8 15-2" stroke="#a5e4fc" strokeWidth="1.500" /><path d="M3 28C-1 24 8 8 19 3c6-2.500 9 0 6.500 6" stroke="#f3c52d" strokeWidth="2.500" /></svg>
);
const FolderIcon = () => (
  <svg width="32" height="28" viewBox="0 0 32 28"><path d="M2 2h12v4h15v18H2z" fill="#d9b85c" /><path d="M5 1h4v4H5z" fill="#43a047" /><path d="M11 3h14v5H11z" fill="#f4f4ef" /><path d="M13 4h3v2h-3z" fill="#d64b3b" /><path d="M21 4h3v2h-3z" fill="#4a90d9" /><path d="M1 7h30v18H1z" fill="#f5e29a" stroke="#d8b655" strokeWidth=".8" /><path d="M1 14h30" stroke="#ecd27c" /><path d="M6 27v-9c0-1.500 1-2 2-2h16c1 0 2 .5 2 2v9h-4v-6H10v6z" fill="#9fd8f4" stroke="#5ba9d4" /></svg>
);
const PlayerIcon = () => (
  <svg width="26" height="26" viewBox="0 0 26 26"><path d="M5 2h20v20H5z" fill="#4f9fcb" stroke="#a7d6ee" /><path d="M3 2.500h19v21H3z" fill="#7dbfe0" stroke="#b7dff2" /><path d="M1 3h18v21H1z" fill="#a8cfe4" stroke="#5e9fc5" /><circle cx="10.500" cy="13.500" r="8.500" fill="#f07c1f" stroke="#fbd0a2" /><path d="M8 8.500v10l8-5z" fill="#fff" /></svg>
);
const ExcelIcon = () => (
  <svg width="30" height="30" viewBox="0 0 30 30"><path d="M3.500 9C4.500 3.500 8.500 1.500 14 1.500h11V9z" fill="#eaf4e4" stroke="#58a33f" strokeWidth="1.500" /><path d="M7 5.500C9 3.500 12 3.500 22 3.500" fill="none" stroke="#9ccf88" /><path d="M2 8h27v20H2z" fill="#f6fbf3" stroke="#8fc07c" /><path d="M20.500 10h6.500v4h-6.500zM20.500 16h6.500v4h-6.500zM20.500 22h6.500v4h-6.500zM12.500 22.500h6v3.500h-6zM4 22.500h6.500v3H4z" fill="#5fae4b" /><path d="M4.500 9.500h4.500l2 3.500 2.500-3.500h4L13 15l4.500 6H13l-2-3.500L7.500 21H4l4.500-6z" fill="#1d5f2c" /></svg>
);
const CamTray = () => (
  <svg width="15" height="13" viewBox="0 0 15 13"><path d="M0 0h11v9.500H0zM11 4l4-2.500v7L11 6z" fill="#54c3d6" /><circle cx="5.500" cy="5" r="3.500" fill="#fff" /><circle cx="5.500" cy="5" r="1.900" fill="#d4343c" /><path d="M5.500 9v2.500M2.500 11.800h6" stroke="#54c3d6" /></svg>
);
const AviraTray = () => (
  <svg width="15" height="15" viewBox="0 0 15 15"><path d="M0 0h15v15H0z" fill="#dc1f2b" /><path d="M3 6.500C4.500 2.500 9.500 2 11.500 6c.8 1.800.8 4 .8 5.500M11 8.500C8 6 5 7.500 3 10.500c-.5 1.200 2 1.500 3.500.2L9 7.500" fill="none" stroke="#fff" strokeWidth="1.400" /></svg>
);
const SoundTray = () => (
  <svg width="15" height="14" viewBox="0 0 15 14"><path d="M0 4.500h3L7 1v12L3 9.500H0z" fill="#fff" /><path d="M9 4.500c1.500 1.500 1.500 3.500 0 5M11 2.500c2.500 2.500 2.500 6.500 0 9" fill="none" stroke="#dfe8f2" /></svg>
);
const FlagTray = () => (
  <svg width="15" height="14" viewBox="0 0 15 14"><path d="M1.500 0v14" stroke="#fff" strokeWidth="1.300" /><path d="M2.500 1.500h6v2h6c-2 1.500-2.500 3-3.500 4.500H8V7H2.500z" fill="#fff" /></svg>
);
const NetTray = () => (
  <svg width="16" height="14" viewBox="0 0 16 14"><path d="M0 9h2v3H0zM3 7h2v5H3zM6 4h2v8H6zM9 1h3v6H9z" fill="#77838c" /><path d="M10 4l1.300 2.500L14 5.500l-.5 2.500 2.500 1-2.500 1 .5 2.500-2.700-.8L10 14l-1.300-2.300-2.700.8.5-2.500L4 9l2.500-1L6 5.500l2.700 1z" fill="#f0a52a" /></svg>
);
const BatteryTray = () => (
  <svg width="11" height="15" viewBox="0 0 11 15"><path d="M3.500.500h4v1.500h2v12h-8V2h2z" fill="#1a2c4a" stroke="#fff" strokeWidth="1.400" /><path d="M3.500 6.500h4v5.500h-4z" fill="#fff" /></svg>
);

/* ---------- ribbon content ---------- */
const Group = ({ name, w, launch, children }: { name: string; w: number; launch?: boolean; children: React.ReactNode }) => (
  <GroupBox $w={w} aria-label={name}>
    <GroupBody>{children}</GroupBody>
    <GroupLabel $launch={launch}><span>{name}</span>{launch && <Launcher />}</GroupLabel>
  </GroupBox>
);
const Big = ({ w, icon, a, b }: { w: number; icon: React.ReactNode; a: string; b?: string }) => (
  <BigButton $w={w} type="button">
    <BigIcon>{icon}</BigIcon>
    <span>{a}</span>
    <CaretLine>{b}<Caret /></CaretLine>
  </BigButton>
);

const tabs = ["Home", "Insert", "Page Layout", "Formulas", "Data", "Review", "View"];
const columns = "ABCDEFGHIJKLMNOPQR".split("");
const colWidths = [60, 55, 123, 86, 156];
const labels = ["DATE", "INCOME", "SOURCE OF INCOME", "EXPENDITURE", "SOURCE OF EXPENDITURE", "BALANCE"];
const data: Record<number, string[]> = {
  8: ["07-10-17", "2500", "SHOPE", "1520", "FRIEDNS", "980"],
  9: ["08-10-17", "3000", "DEALING", "", "", ""],
};
const rowHeight = (n: number) => (n === 7 ? 22 : n % 4 === 0 ? 18 : 19);

const cellsFor = (n: number) => {
  const out: React.ReactNode[] = [];
  columns.forEach((c, i) => {
    if (n <= 6 && i >= 5 && i <= 12) {
      if (n === 1 && i === 5) out.push(<TitleCell key={c} colSpan={8} rowSpan={6}>Balance Sheet Formula</TitleCell>);
      return;
    }
    if (n === 7 && i < 6) {
      out.push(<LabelCell key={c}>{labels[i]}</LabelCell>);
      return;
    }
    const v = data[n]?.[i] ?? "";
    out.push(<Cell key={c} $right={/^[\d-]+$/.test(v)} $active={n === 9 && c === "B"}>{v}</Cell>);
  });
  return out;
};

export default function App() {
  return (
    <Desktop>
      <Global />
      <TitleBar>
        <QuickZone>
          <QuickBar>
            <button type="button" aria-label="Save"><SaveIcon /></button>
            <button type="button" aria-label="Undo"><Undo /></button>
            <Caret c="#dce8f8" />
            <button type="button" aria-label="Redo"><Undo redo /></button>
            <Caret c="#a9c0e4" />
          </QuickBar>
          <QuickMore type="button" aria-label="Customize toolbar">
            <svg width="7" height="7" viewBox="0 0 7 7"><path d="M1 1h5" stroke="#fff" /><path d="M0 3h7L3.500 6.500z" fill="#fff" /></svg>
          </QuickMore>
        </QuickZone>
        <WindowTitle>Book1 - Microsoft Excel</WindowTitle>
        <WindowButtons>
          <WindowButton type="button" aria-label="Minimize"><svg width="11" height="4"><path d="M.5.500h10v3H.5z" fill="#fff" stroke="#4a5c7a" strokeWidth=".6" /></svg></WindowButton>
          <WindowButton type="button" aria-label="Restore"><svg width="12" height="11" viewBox="0 0 12 11" fill="none" stroke="#fff" strokeWidth="1.600"><path d="M4 3V1h7v6H9" /><path d="M1.500 3.500h6.500v6H1.500z" /></svg></WindowButton>
          <WindowButton type="button" aria-label="Close" $close><svg width="10" height="9" viewBox="0 0 10 9"><path d="M1 1l8 7M9 1L1 8" stroke="#fff" strokeWidth="2.400" /></svg></WindowButton>
        </WindowButtons>
      </TitleBar>
      <OfficeOrb type="button" aria-label="Office menu"><OfficeLogo /></OfficeOrb>

      <TabRow>
        {tabs.map((t, i) => <Tab key={t} type="button" $active={i === 0}>{t}</Tab>)}
        <TabTools>
          <button type="button" aria-label="Help"><HelpIcon /></button>
          <svg width="54" height="9" viewBox="0 0 54 9" fill="none" stroke="#5f7290" strokeWidth="1.600"><path d="M1 7.500h6" /><path d="M20 3.500h6v4h-6zM22 1.500h6v4" strokeWidth="1.200" /><path d="M42 1l6 6.500M48 1l-6 6.500" /><path d="M50 1h4l-2 3z" fill="#5f7290" stroke="none" /></svg>
        </TabTools>
      </TabRow>

      <Ribbon>
        <Group name="Clipboard" w={142} launch>
          <Big w={40} icon={<PasteIcon />} a="Paste" />
          <SmallList>
            <SmallButton type="button"><CutIcon />Cut</SmallButton>
            <SmallButton type="button"><CopyIcon />Copy</SmallButton>
            <SmallButton type="button"><BrushIcon />Format Painter</SmallButton>
          </SmallList>
        </Group>
        <Group name="Font" w={184} launch>
          <Rows>
            <Row>
              <SelectBox $w={91}><Select aria-label="Font"><option>Calibri</option></Select><Caret /></SelectBox>
              <SelectBox $w={41}><Select aria-label="Font size"><option>11</option></Select><Caret /></SelectBox>
              <ButtonSet>
                <Tool $w={21} type="button" aria-label="Grow font"><GrowA /></Tool>
                <Tool $w={21} type="button" aria-label="Shrink font"><GrowA down /></Tool>
              </ButtonSet>
            </Row>
            <Row>
              <ButtonSet>
                <Tool $w={20} type="button"><b>B</b></Tool>
                <Tool $w={22} type="button"><b><i>I</i></b></Tool>
                <Tool $w={32} type="button"><b><u>U</u></b><Caret /></Tool>
              </ButtonSet>
              <ButtonSet><Tool $w={30} type="button" aria-label="Borders"><BorderIcon /><Caret /></Tool></ButtonSet>
              <ButtonSet>
                <Tool $w={31} type="button" aria-label="Fill color"><FillColor /><Caret /></Tool>
                <Tool $w={31} type="button" aria-label="Font color"><FontColor /><Caret /></Tool>
              </ButtonSet>
            </Row>
          </Rows>
        </Group>
        <Group name="Alignment" w={259} launch>
          <Rows>
            <Row>
              <ButtonSet>
                <Tool $w={21} type="button" aria-label="Top align"><Lines y={0} rows={[[0, 14], [2, 12], [0, 14]]} /></Tool>
                <Tool $w={21} type="button" aria-label="Middle align"><Lines y={3} rows={[[0, 14], [2, 12], [0, 14]]} /></Tool>
                <Tool $w={21} $on type="button" aria-label="Bottom align"><Lines y={5} rows={[[0, 14], [2, 12], [0, 14]]} /></Tool>
              </ButtonSet>
              <ButtonSet><Tool $w={28} type="button" aria-label="Orientation"><Orientation /><Caret /></Tool></ButtonSet>
              <ButtonSet><Tool $w={31} type="button" aria-label="Text direction">
                <svg width="14" height="12" viewBox="0 0 14 12"><path d="M0 2l4 3.500L0 9z" fill="#4a74c4" /><path d="M9.500 11V1.500M12 11V1.500M13.500 1.500H8.500" stroke="#20242e" strokeWidth="1.200" fill="none" /><path d="M9 1c-3.500 0-3.500 5 0 5z" fill="#20242e" /></svg><Caret />
              </Tool></ButtonSet>
            </Row>
            <Row>
              <ButtonSet>
                <Tool $w={21} type="button" aria-label="Align left"><Lines rows={[[0, 14], [0, 9], [0, 14], [0, 9], [0, 14]]} /></Tool>
                <Tool $w={21} type="button" aria-label="Center"><Lines rows={[[0, 14], [3, 11], [0, 14], [3, 11], [0, 14]]} /></Tool>
                <Tool $w={21} type="button" aria-label="Align right"><Lines rows={[[0, 14], [5, 14], [0, 14], [5, 14], [0, 14]]} /></Tool>
              </ButtonSet>
              <ButtonSet>
                <Tool $w={20} type="button" aria-label="Decrease indent"><Indent /></Tool>
                <Tool $w={20} type="button" aria-label="Increase indent"><Indent flip /></Tool>
              </ButtonSet>
            </Row>
          </Rows>
          <WideTools>
            <SmallButton type="button"><WrapIcon />Wrap Text</SmallButton>
            <SmallButton type="button"><MergeIcon />Merge &amp; Center<Caret /></SmallButton>
          </WideTools>
        </Group>
        <Group name="Number" w={127} launch>
          <Rows>
            <Row><SelectBox $w={120}><Select aria-label="Number format"><option>General</option></Select><Caret /></SelectBox></Row>
            <Row>
              <ButtonSet>
                <Tool $w={31} type="button" aria-label="Accounting format"><MoneyIcon /><Caret /></Tool>
                <Tool $w={22} type="button">%</Tool>
                <Tool $w={21} type="button"><b>,</b></Tool>
              </ButtonSet>
              <ButtonSet>
                <Tool $w={20} type="button" aria-label="Increase decimal"><Decimal /></Tool>
                <Tool $w={20} type="button" aria-label="Decrease decimal"><Decimal less /></Tool>
              </ButtonSet>
            </Row>
          </Rows>
        </Group>
        <Group name="Styles" w={163}>
          <Big w={64} icon={<CondIcon />} a="Conditional" b="Formatting" />
          <Big w={51} icon={<TableFmtIcon />} a="Format" b="as Table" />
          <Big w={40} icon={<CellStyleIcon />} a="Cell" b="Styles" />
        </Group>
        <Group name="Cells" w={125}>
          <Big w={36} icon={<InsertIcon />} a="Insert" />
          <Big w={42} icon={<DeleteIcon />} a="Delete" />
          <Big w={38} icon={<FormatIcon />} a="Format" />
        </Group>
        <Group name="Editing" w={165}>
          <SmallList>
            <SmallButton type="button"><SigmaIcon />AutoSum<Caret /></SmallButton>
            <SmallButton type="button"><FillIcon />Fill<Caret /></SmallButton>
            <SmallButton type="button"><ClearIcon />Clear<Caret /></SmallButton>
          </SmallList>
          <Big w={42} icon={<SortIcon />} a="Sort &amp;" b="Filter" />
          <Big w={38} icon={<FindIcon />} a="Find &amp;" b="Select" />
        </Group>
      </Ribbon>

      <FormulaBar>
        <NameBox><BarInput $center aria-label="Name box" defaultValue="B9" /><Caret w={7} c="#111" /></NameBox>
        <FxPill><Knob /><span>fx</span></FxPill>
        <BarInput aria-label="Formula" defaultValue="3000" />
        <ExpandButton type="button" aria-label="Expand formula bar">
          <svg width="6" height="9" viewBox="0 0 6 9" fill="none" stroke="#111" strokeWidth="1.400"><path d="M.5 1L3 3.500 5.500 1M.5 5L3 7.500 5.500 5" /></svg>
        </ExpandButton>
      </FormulaBar>

      <SheetArea>
        <SheetView>
          <Grid>
            <colgroup>
              <col width={25} />
              {columns.map((c, i) => <col key={c} width={colWidths[i] ?? 60} />)}
            </colgroup>
            <thead>
              <GridRow $h={19}>
                <Corner />
                {columns.map((c) => <ColHead key={c} scope="col" $on={c === "B"}>{c}</ColHead>)}
              </GridRow>
            </thead>
            <tbody>
              {Array.from({ length: 25 }, (_, k) => k + 1).map((n) => (
                <GridRow key={n} $h={rowHeight(n)}>
                  <RowHead scope="row" $on={n === 9}>{n}</RowHead>
                  {cellsFor(n)}
                </GridRow>
              ))}
            </tbody>
          </Grid>
        </SheetView>
        <VScroll>
          <VSplit />
          <VArrow type="button" aria-label="Scroll up"><svg width="6" height="3"><path d="M0 3h6L3 0z" fill="#24406f" /></svg></VArrow>
          <VThumb><svg width="5" height="8"><path d="M0 .5h5M0 3h5M0 5.500h5" stroke="#6b7c99" /></svg></VThumb>
          <VTrack />
          <VArrow type="button" aria-label="Scroll down"><Caret c="#24406f" /></VArrow>
        </VScroll>
        <OuterEdge />
      </SheetArea>

      <SheetBar>
        <SheetNav>
          <NavArrow d="M1 1v5M6 1L3 3.500 6 6z" />
          <NavArrow d="M5 1L2.500 3.500 5 6z" />
          <NavArrow d="M3 1l2.500 2.500L3 6z" />
          <NavArrow d="M7 1v5M2 1l3 2.500L2 6z" />
        </SheetNav>
        <SheetTab type="button" $on $w={67}>Sheet1</SheetTab>
        <SheetTab type="button" $w={68}>Sheet2</SheetTab>
        <SheetTab type="button" $w={68}>Sheet3</SheetTab>
        <SheetTab type="button" $w={42} aria-label="Insert worksheet">
          <svg width="14" height="12" viewBox="0 0 14 12"><path d="M5.500 3.500H13v6l-2 2H5.500" fill="#f4f8ff" stroke="#4e6797" /><path d="M4 0v8M0 4h8M1 1l6 6M7 1L1 7" stroke="#e29a35" /></svg>
        </SheetTab>
        <HScroll>
          <Splitter />
          <ScrollArrow type="button" aria-label="Scroll left"><svg width="5" height="8"><path d="M5 0v8L0 4z" fill="#24406f" /></svg></ScrollArrow>
          <HThumb><svg width="8" height="7"><path d="M.5 0v7M3 0v7M5.500 0v7" stroke="#77849b" /></svg></HThumb>
          <HGap />
          <ScrollArrow type="button" aria-label="Scroll right"><svg width="5" height="8"><path d="M0 0v8l5-4z" fill="#24406f" /></svg></ScrollArrow>
          <Splitter />
        </HScroll>
      </SheetBar>

      <StatusBar>
        <StatusText>Ready</StatusText>
        <StatusRight>
          <ViewButtons>
            <ViewButton type="button" $on aria-label="Normal view"><svg width="12" height="10"><path d="M.5.500h11v9H.5zM.5 3.500h11M.5 6.500h11M4.500.500v9M8 .5v9" fill="#fff" stroke="#4e5b74" /></svg></ViewButton>
            <ViewButton type="button" aria-label="Page layout view"><svg width="11" height="11"><path d="M.5.500h10v10H.5z" fill="#c3cad6" stroke="#5d6a84" /><path d="M3 2.500h5v6H3z" fill="#fff" stroke="#5d6a84" /></svg></ViewButton>
            <ViewButton type="button" aria-label="Page break view"><svg width="12" height="11"><path d="M.5.500h11v10H.5z" fill="#9ba6b9" stroke="#5d6a84" /><path d="M1 1h4v6H1zM7 1h4v6H7z" fill="#fff" /></svg></ViewButton>
          </ViewButtons>
          <ZoomText type="button">100%</ZoomText>
          <button type="button" aria-label="Zoom out"><svg width="15" height="15"><circle cx="7.500" cy="7.500" r="6.500" fill="#dde6f3" stroke="#4d5d7b" /><path d="M4 7.500h7" stroke="#333" strokeWidth="1.500" /></svg></button>
          <ZoomRange type="range" aria-label="Zoom" min={0} max={200} defaultValue={98} />
          <button type="button" aria-label="Zoom in"><svg width="14" height="15"><circle cx="7.500" cy="7.500" r="6.500" fill="#dde6f3" stroke="#4d5d7b" /><path d="M4 7.500h7M7.500 4v7" stroke="#333" strokeWidth="1.500" /></svg></button>
        </StatusRight>
      </StatusBar>

      <Taskbar>
        <TaskButton $w={51} type="button" aria-label="Start"><StartOrb /></TaskButton>
        <TaskButton $w={63} type="button" aria-label="Internet Explorer"><IeIcon /></TaskButton>
        <TaskButton $w={56} type="button" aria-label="File explorer"><FolderIcon /></TaskButton>
        <TaskButton $w={60} type="button" aria-label="Media player"><PlayerIcon /></TaskButton>
        <TaskButton $w={55} $on type="button" aria-label="Excel"><ExcelIcon /></TaskButton>
        <Tray>
          <Lang>EN</Lang>
          <CamTray /><AviraTray /><SoundTray /><FlagTray /><NetTray /><BatteryTray />
          <Clock>11:44 AM<br />08-Oct-17</Clock>
          <ShowDesktop type="button" aria-label="Show desktop" />
        </Tray>
      </Taskbar>

      <Recorder>
        <PauseButton type="button" aria-label="Pause recording">
          <svg width="69" height="51" viewBox="0 0 69 51"><path d="M0 0h61c10 12 10 39 0 51H0z" fill="#2f302f" /><path d="M6 4v43" stroke="#454645" strokeWidth="2" /><circle cx="35" cy="25.500" r="23.500" fill="#235070" /><circle cx="35" cy="25.500" r="18.500" fill="#0f8cd6" /><path d="M31.500 18v14.500M38.500 18v14.500" stroke="#fff" strokeWidth="3" /></svg>
        </PauseButton>
        <RecordInfo>Recording...<RecordTime>00:03:14</RecordTime></RecordInfo>
        <Meter><svg width="18" height="24" viewBox="0 0 18 24" stroke="#1c7fae" strokeWidth="2"><path d="M1 10v13M4.200 1v22M7.400 1v22M10.600 1v22M13.800 1v22M17 9v14" /></svg></Meter>
        <Volume>
          <svg width="62" height="22" viewBox="0 0 62 22"><path d="M0 17L61 5v12z" fill="#e3eef6" /></svg>
          <VolumeRange type="range" aria-label="Volume" min={0} max={100} defaultValue={100} />
        </Volume>
        <RecTool type="button" aria-label="Webcam"><svg width="26" height="28" viewBox="0 0 26 28" fill="none" stroke="#2a2a2a"><circle cx="11" cy="12" r="10" strokeWidth="1.300" /><circle cx="11" cy="12" r="4" fill="#2a2a2a" /><circle cx="9.500" cy="10.500" r="1" fill="#bbb" stroke="none" /><path d="M4 24c3 2.500 9 2.500 13 .5M16 22h6M19.500 19v6" strokeWidth="1.200" /></svg></RecTool>
        <RecTool type="button" aria-label="Draw"><svg width="26" height="28" viewBox="0 0 26 28"><path d="M1.500 25.500l2-7L17 5l5 5L8.500 23.500z" fill="#333" /><path d="M18 4l2.500-2.500c1-.8 4.500 2.500 3.500 4L22.500 8.500z" fill="#fff" stroke="#333" strokeWidth="1.200" /><path d="M11 15L17 9" stroke="#ddd" strokeWidth="1.500" /><path d="M1.500 25.500l2-6 4 4z" fill="#999" stroke="#333" /></svg></RecTool>
      </Recorder>
      <ClickHalo>
        <svg width="15" height="15" viewBox="0 0 15 15"><path d="M5 1h5v4h4v5h-4v4H5v-4H1V5h4z" fill="#fff" stroke="#111" strokeWidth="1.500" /></svg>
      </ClickHalo>
    </Desktop>
  );
}
